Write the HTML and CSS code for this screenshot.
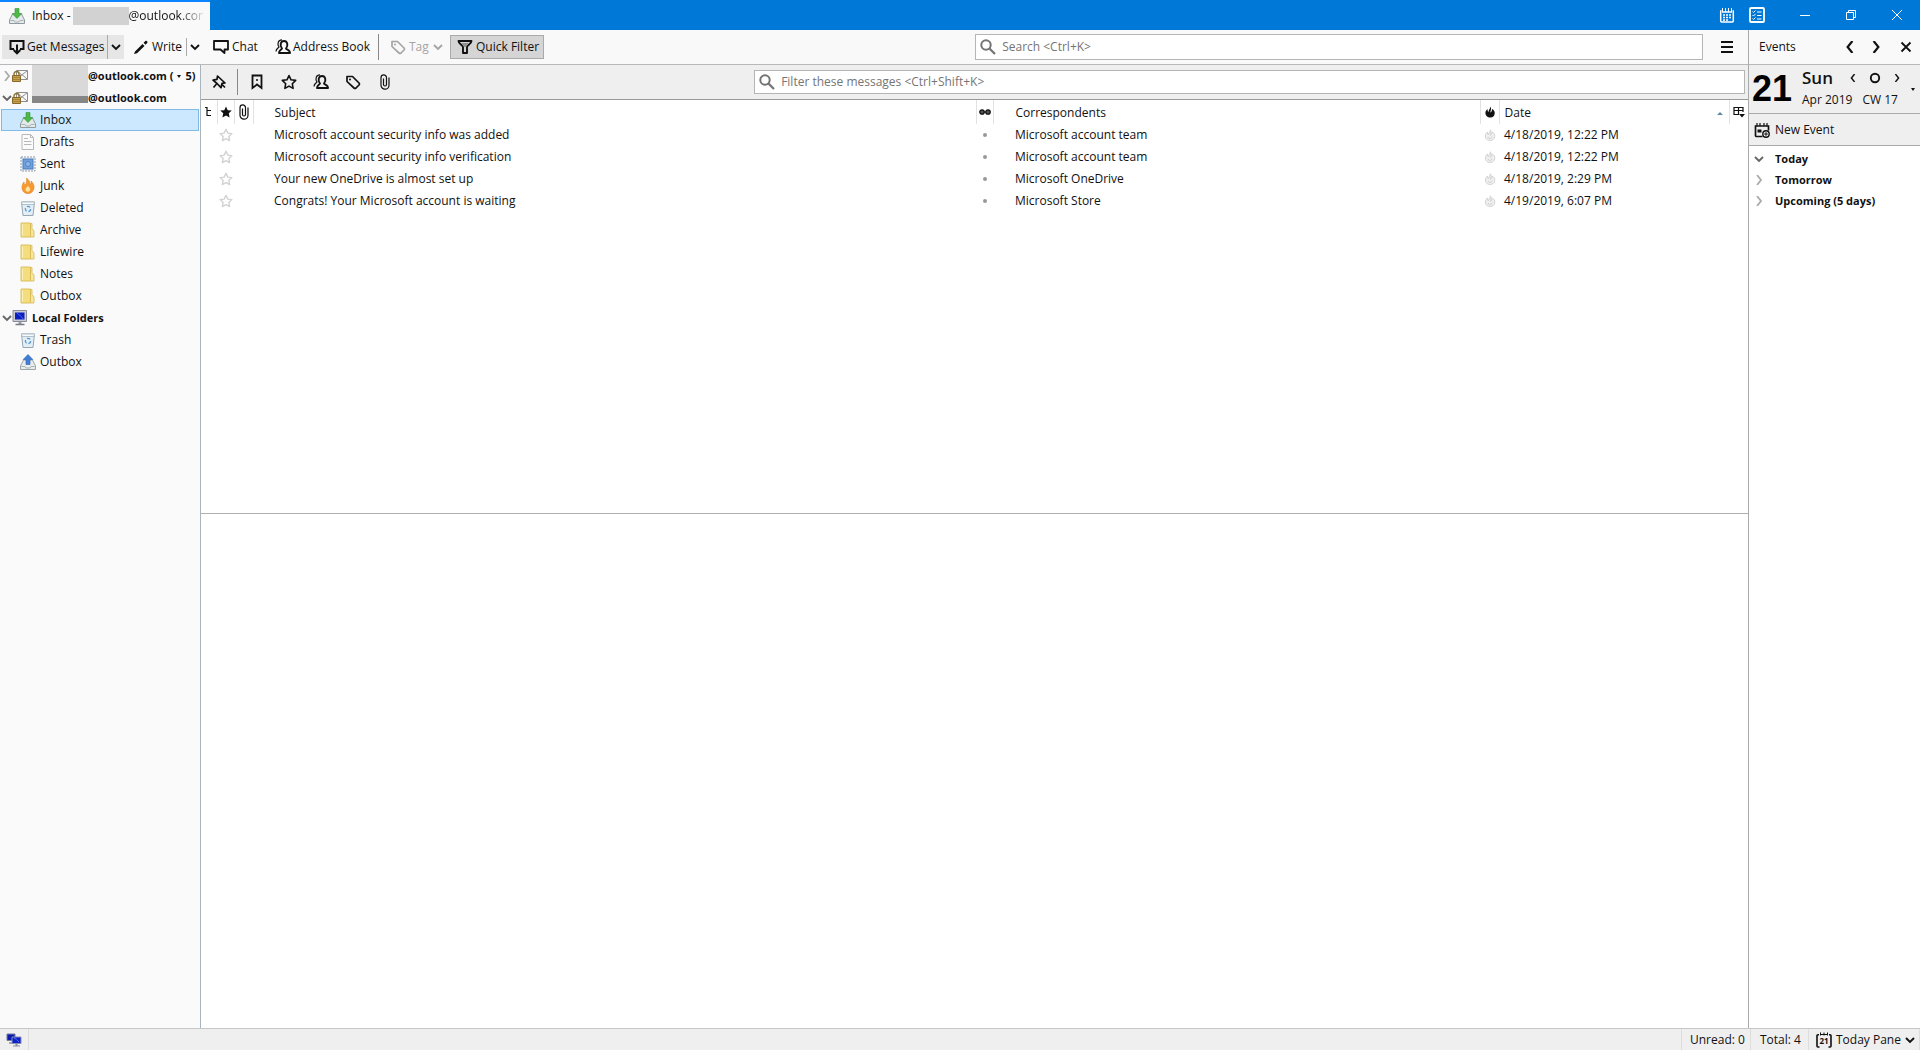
FILE: index.html
```html
<!DOCTYPE html>
<html lang="en">
<head>
<meta charset="utf-8">
<title>Inbox - outlook.com</title>
<meta name="viewport" content="width=device-width, initial-scale=1">
<link rel="stylesheet" href="styles.css">
</head>
<body>
<svg class="sprite" aria-hidden="true">
  <symbol id="inbox" viewBox="0 0 16 16"><path d="M3.500 6h9l3 6v3.500H.5V12z" fill="#e4e9ea" stroke="#8e9a9e"/><path d="M1.500 12.500h3.500l1 1.500h4l1-1.500h3.500" fill="none" stroke="#a9b3b6"/><path d="M6 .5h4v5h2.800L8 10.500 3.200 5.500H6z" fill="#4cb944" stroke="#35923a" stroke-width=".6"/></symbol>
  <symbol id="outbox" viewBox="0 0 16 16"><path d="M3.500 6h9l3 6v3.500H.5V12z" fill="#e9eced" stroke="#9aa4a8"/><path d="M1.500 12.500h3.500l1 1.500h4l1-1.500h3.500" fill="none" stroke="#a9b3b6"/><path d="M6 10.500h4v-5h2.800L8 .5 3.200 5.500H6z" fill="#3f7fd6" stroke="#2c61ad" stroke-width=".6"/></symbol>
  <symbol id="draft" viewBox="0 0 16 16"><path d="M2 .5h8.500l3 3v12H2z" fill="#fbfbfb" stroke="#b8b8b8"/><path d="M10.500.5v3h3M4 4.500h4M4 7.500h7.500M4 10.500h7.500" fill="none" stroke="#b8b8b8"/></symbol>
  <symbol id="sent" viewBox="0 0 16 16"><rect x="1" y="1" width="14" height="14" fill="#f2f4f6" stroke="#8f9aa6" stroke-dasharray="2 1"/><rect x="3" y="3" width="10" height="10" fill="#6fa0dc" stroke="#4a7dbd"/><circle cx="8" cy="8" r="2.500" fill="#8db6e8" stroke="#5486c6"/></symbol>
  <symbol id="junk" viewBox="0 0 16 16"><path d="M6.500 0c2.500 2 3.500 4 3.500 6.500 1-.5 1.500-2 1-3.500 2 2 3.500 4 3 7-.5 3.500-3 5.500-6 5.500s-6-2-6-6C2 7 3 5 4 4c0 1.500.5 2.500 1.300 3C6.500 5 7 3 6.500 0z" fill="#f59b2f" stroke="#e07d1e" stroke-width=".6"/><path d="M8 8c1.200 1.300 2.500 2.300 2 4.300-.5 1.500-3 2-4.200.5C5 11 6 9.500 8 8z" fill="#ffe3a3"/></symbol>
  <symbol id="trash" viewBox="0 0 16 16"><path d="M1.500 2h13l-1.500 13.500H3z" fill="#e3eef5" stroke="#94a7b3"/><path d="M1.500 2h13L14 4.500H2z" fill="#f6fafc" stroke="#a4b4be" stroke-width=".8"/><circle cx="8" cy="9" r="2.600" fill="none" stroke="#5a9bcf" stroke-width="1.300" stroke-dasharray="3.500 1.900"/></symbol>
  <symbol id="folder" viewBox="0 0 16 16"><path d="M1 1h9.500v14H1z" fill="#f4dd7e" stroke="#dcc05c"/><path d="M10.500 1.500h1.500v5l2 2.500v6h-3.500z" fill="#f7e79b" stroke="#d6b852" stroke-width=".8"/><path d="M2.500 2.500v11" stroke="#fbf0b8"/></symbol>
  <symbol id="pc" viewBox="0 0 16 16"><path d="M1 .5h13.500v11H1z" fill="#c9ccd4" stroke="#8a8d99"/><path d="M3 2.500h9.500v7H3z" fill="#0b1fc0"/><path d="M5 3c1.500 2 4 2 6 6" stroke="#4b6bff" fill="none"/><path d="M6.500 12h3v2h-3z" fill="#9a9da6"/><path d="M3.500 14.500h9" stroke="#777a85" stroke-width="1.500"/></symbol>
  <symbol id="account" viewBox="0 0 16 16"><path d="M4.500 2.500h11v9h-11z" fill="#f8f8f8" stroke="#8d8d8d"/><path d="M5 3l5.500 4.500M15 3L9 7.500M15 11l-4.500-4" stroke="#8d8d8d" fill="none"/><path d="M2 8V6a2.500 2.500 0 0 1 5 0v2" fill="none" stroke="#8b7238" stroke-width="1.400"/><path d="M.5 7.500h8v6h-8z" fill="#c7a04b" stroke="#86682a"/><path d="M1 9.500h7M1 11.500h7" stroke="#a88439"/></symbol>
  <symbol id="network" viewBox="0 0 16 16"><path d="M1 2h8v6.500H1z" fill="#0a1cae" stroke="#777b9c"/><path d="M3 11h5" stroke="#8b8ea0" stroke-width="1.500"/><path d="M6 5h9v6.500H6z" fill="#0b22cc" stroke="#8a8eb0"/><path d="M8 6c2 1 3 2 5 4" stroke="#5876ff"/><path d="M9.500 12h2v1.500h2.500v1H7v-1h2.500z" fill="#8b8ea0"/></symbol>
  <symbol id="get" viewBox="0 0 16 16"><path d="M5 10H1.500V2h13v8H11M8 5.500V14M4.700 11L8 14.300 11.300 11" fill="none" stroke="currentColor" stroke-width="2"/></symbol>
  <symbol id="down" viewBox="0 0 10 10"><path d="M1 3l4 4 4-4" fill="none" stroke="currentColor" stroke-width="1.900"/></symbol>
  <symbol id="left" viewBox="0 0 10 10"><path d="M7 0L3 5l4 5" fill="none" stroke="currentColor" stroke-width="1.800"/></symbol>
  <symbol id="right" viewBox="0 0 10 10"><path d="M3 0l4 5-4 5" fill="none" stroke="currentColor" stroke-width="1.800"/></symbol>
  <symbol id="pen" viewBox="0 0 16 16"><path d="M2 12.500l7.500-7.500 2 2L4 14.300l-3 .8zM10.600 3.800l1.800-1.800c1.200-.6 2.400.6 2 1.800l-1.900 1.900z" fill="currentColor"/></symbol>
  <symbol id="chat" viewBox="0 0 16 16"><path d="M1 2h14v8.500h-3.500V14l-4-3.500H1z" fill="none" stroke="currentColor" stroke-width="1.800" stroke-linejoin="round"/></symbol>
  <symbol id="people" viewBox="0 0 16 16"><path d="M7 9.500C4.500 6.500 5.500 2 9 2s4.500 4.500 2 7.500c0 1 4 1 4 4.500H4c0-3 3-3.500 3-4.500z" fill="none" stroke="currentColor" stroke-width="1.900" stroke-linejoin="round"/><path d="M7 .8C3 .8 2 5 4 8c-.5 1.200-3 1.500-3 4.500" fill="none" stroke="currentColor" stroke-width="1.200"/></symbol>
  <symbol id="tag" viewBox="0 0 16 16"><path d="M2 2.500h5.500L14 9a1.500 1.500 0 0 1 0 2L11 14a1.500 1.500 0 0 1-2 0L2 7.500z" fill="none" stroke="currentColor" stroke-width="1.700" stroke-linejoin="round"/><circle cx="5" cy="5.500" r="1" fill="currentColor"/></symbol>
  <symbol id="funnel" viewBox="0 0 16 16"><path d="M1.500 2h13c0 3-4.500 4-4.500 6v6H6V8C6 6 1.500 5 1.500 2z" fill="none" stroke="currentColor" stroke-width="1.900" stroke-linejoin="round"/><path d="M4 4h8L8.500 8h-1z" fill="#909093"/></symbol>
  <symbol id="search" viewBox="0 0 16 16"><circle cx="6" cy="6" r="4.700" fill="none" stroke="currentColor" stroke-width="2"/><path d="M9.500 9.500l5.500 5.500" stroke="currentColor" stroke-width="2.200"/></symbol>
  <symbol id="pin" viewBox="0 0 16 16"><path d="M6.500 2l7.500 7-3 .4-1 4.300-4-4.200L2 6.200l4-.9zM5.500 10L2.500 13.500M10.500 10l3.500 3.500" fill="none" stroke="currentColor" stroke-width="1.700" stroke-linejoin="round"/></symbol>
  <symbol id="bookmark" viewBox="0 0 16 16"><path d="M3.500 1.500h9v12.500L8 10.500 3.500 14z" fill="none" stroke="currentColor" stroke-width="1.800"/><circle cx="8" cy="6" r="1" fill="currentColor"/></symbol>
  <symbol id="star" viewBox="0 0 16 16"><path d="M8 1.500l2 4.300 4.700.6-3.400 3.300.8 4.700L8 12.100l-4.100 2.300.8-4.700L1.300 6.400 6 5.800z" fill="none" stroke="currentColor" stroke-width="1.600" stroke-linejoin="round"/></symbol>
  <symbol id="starfull" viewBox="0 0 16 16"><path d="M8 .5l2.300 5 5.400.6-4 3.700 1.100 5.400L8 12.500l-4.800 2.700 1.100-5.400-4-3.700 5.400-.6z" fill="currentColor"/></symbol>
  <symbol id="clip" viewBox="0 0 16 16"><path d="M6.500 4.500v6a1.500 1.500 0 0 0 3 0V3.700a2.700 2.700 0 0 0-5.500 0v7.500a4 4 0 0 0 8 0V3.500" fill="none" stroke="currentColor" stroke-width="1.200"/></symbol>
  <symbol id="thread" viewBox="0 0 12 12"><path d="M2 1.500h2M4 1v8.500h4M4 4.500h4" fill="none" stroke="currentColor" stroke-width="1.200"/></symbol>
  <symbol id="glasses" viewBox="0 0 12 12"><circle cx="3" cy="6" r="2.200" fill="#555" stroke="#111" stroke-width="1.300"/><circle cx="9" cy="6" r="2.200" fill="#555" stroke="#111" stroke-width="1.300"/><path d="M5 6h2" stroke="#111"/></symbol>
  <symbol id="flame" viewBox="0 0 12 12"><path d="M6.500.5C8 4 6 5 6.500 6.500 7.500 6 8 4.500 8 3c2 1 3 2.500 2.700 4.500A4.500 4.500 0 0 1 6 11.500 4.500 4.500 0 0 1 1.400 7C1.400 5 2.500 4 3.500 3c0 1.500.3 2.500 1 3C4.500 4 6 3 6.500.5z" fill="currentColor"/></symbol>
  <symbol id="flameline" viewBox="0 0 12 12"><path d="M6.500.8C8 4 6 5 6.500 6.500 7.500 6 8 4.500 8 3c2 1 3 2.500 2.700 4.500A4.600 4.600 0 0 1 6 11.400 4.600 4.600 0 0 1 1.400 7C1.400 5 2.500 4 3.500 3c0 1.500.3 2.500 1 3C4.500 4 6 3 6.500.8z" fill="#f1f1f1" stroke="currentColor"/><path d="M4 7.500a2 2 0 0 0 4 0" fill="none" stroke="currentColor"/></symbol>
  <symbol id="picker" viewBox="0 0 12 12"><path d="M1 9V1.500h9V6M1 4.500h9M5.500 1.500V8M1 8.500h5" fill="none" stroke="currentColor" stroke-width="1.200"/><path d="M6 8h6l-3 3.500z" fill="currentColor"/></symbol>
  <symbol id="calendar" viewBox="0 0 16 16"><path d="M1 4h1.500M13.500 4H15M1.700 4v10a1 1 0 0 0 1 1h10.600a1 1 0 0 0 1-1V4M3 5h10" fill="none" stroke="currentColor" stroke-width="1.500"/><path d="M3.500 1v4M6.500 1v4M9.500 1v4M12.500 1v4" stroke="currentColor"/><path d="M4 8h2M7 8h2M10 8h2M4 10.500h2M7 10.500h2M10 10.500h2M4 13h2M7 13h2" stroke="currentColor" stroke-width="1.400"/></symbol>
  <symbol id="tasks" viewBox="0 0 16 16"><rect x="1" y="1" width="14" height="14" rx="1" fill="none" stroke="currentColor" stroke-width="1.800"/><path d="M3.500 4.500l1 1 2-2M3.500 8l1 1 2-2M3.500 11.500l1 1 2-2M8 5h4.500M8 8.500h4.500M8 12h4.500" fill="none" stroke="currentColor"/></symbol>
  <symbol id="newevent" viewBox="0 0 16 16"><path d="M8.500 14.500H2.500a1 1 0 0 1-1-1V4h13v4.500" fill="none" stroke="currentColor" stroke-width="1.700"/><path d="M3 1v3M6 1v3M10 1v3M13 1v3" stroke="currentColor" stroke-width="1.200"/><path d="M3.500 7.500h4v3h-4z" fill="currentColor"/><circle cx="12" cy="12" r="3.200" fill="#efefef" stroke="currentColor" stroke-width="1.400"/><path d="M12 10.200v3.600M10.200 12h3.600" stroke="currentColor"/></symbol>
  <symbol id="dayframe" viewBox="0 0 16 16"><path d="M3 2.800H2a1 1 0 0 0-1 1V14a1 1 0 0 0 1 1h1.500M13 2.800h1a1 1 0 0 1 1 1V14a1 1 0 0 1-1 1h-1.500" fill="none" stroke="currentColor" stroke-width="1.600"/><path d="M4.500.5v3M8 .5v3M11.500.5v3M4.500 2.500h7" stroke="currentColor"/></symbol>
  <symbol id="close" viewBox="0 0 12 12"><path d="M1.500 1.500l9 9M10.500 1.500l-9 9" stroke="currentColor" stroke-width="1.800"/></symbol>
</svg>

<div class="window">
  <header class="titlebar">
    <div class="tab">
      <svg class="icon16"><use href="#inbox"/></svg>
      <span class="tab-text">Inbox -<span class="mask mask-tab"></span><span class="fade">@outlook.com</span></span>
    </div>
    <div class="window-buttons">
      <div class="shortcuts">
        <button class="cal" aria-label="Calendar"><svg class="icon16"><use href="#calendar"/></svg></button>
        <button class="cal" aria-label="Tasks"><svg class="icon16"><use href="#tasks"/></svg></button>
      </div>
      <button class="sys" aria-label="Minimize"><svg class="icon12" viewBox="0 0 12 12"><path d="M1 6.500h10" stroke="currentColor"/></svg></button>
      <button class="sys" aria-label="Restore"><svg class="icon12" viewBox="0 0 12 12"><path d="M1.500 3.500h7v7h-7zM3.500 3V1.500h7v7H9" fill="none" stroke="currentColor"/></svg></button>
      <button class="sys" aria-label="Close"><svg class="icon12" viewBox="0 0 12 12"><path d="M1 1l10 10M11 1L1 11" stroke="currentColor"/></svg></button>
    </div>
  </header>

  <div class="content">
    <div class="mail">
      <div class="toolbar">
        <button class="tool tool-get"><svg class="icon16"><use href="#get"/></svg>Get Messages</button>
        <button class="drop drop-get" aria-label="Get messages options"><svg class="icon10"><use href="#down"/></svg></button>
        <button class="tool tool-write"><svg class="icon16"><use href="#pen"/></svg>Write</button>
        <button class="drop" aria-label="Write options"><svg class="icon10"><use href="#down"/></svg></button>
        <button class="tool tool-chat"><svg class="icon16"><use href="#chat"/></svg>Chat</button>
        <button class="tool tool-book"><svg class="icon16"><use href="#people"/></svg>Address Book</button>
        <span class="rule"></span>
        <button class="tool tool-tag" disabled><svg class="icon16"><use href="#tag"/></svg>Tag<svg class="icon10"><use href="#down"/></svg></button>
        <button class="tool tool-filter" aria-pressed="true"><svg class="icon16"><use href="#funnel"/></svg>Quick Filter</button>
        <label class="field search"><svg class="icon16"><use href="#search"/></svg><input type="text" aria-label="Search" placeholder="Search &lt;Ctrl+K&gt;"></label>
        <button class="menu" aria-label="Application menu"><svg class="icon16" viewBox="0 0 16 16"><path d="M2 3h12M2 8h12M2 13h12" stroke="currentColor" stroke-width="1.800"/></svg></button>
      </div>

      <div class="panes">
        <nav class="folders" aria-label="Folders">
          <a class="row account" href="#a"><svg class="icon10 pale"><use href="#right"/></svg><svg class="icon16"><use href="#account"/></svg><span class="mask"></span>@outlook.com (<span class="tri"></span>5)</a>
          <a class="row account" href="#b"><svg class="icon10 grey"><use href="#down"/></svg><svg class="icon16"><use href="#account"/></svg><span class="mask mask-dark"></span>@outlook.com</a>
          <a class="row sub selected" href="#inbox-folder"><svg class="icon16"><use href="#inbox"/></svg>Inbox</a>
          <a class="row sub" href="#drafts"><svg class="icon16"><use href="#draft"/></svg>Drafts</a>
          <a class="row sub" href="#sent-folder"><svg class="icon16"><use href="#sent"/></svg>Sent</a>
          <a class="row sub" href="#junk-folder"><svg class="icon16"><use href="#junk"/></svg>Junk</a>
          <a class="row sub" href="#deleted"><svg class="icon16"><use href="#trash"/></svg>Deleted</a>
          <a class="row sub" href="#archive"><svg class="icon16"><use href="#folder"/></svg>Archive</a>
          <a class="row sub" href="#lifewire"><svg class="icon16"><use href="#folder"/></svg>Lifewire</a>
          <a class="row sub" href="#notes"><svg class="icon16"><use href="#folder"/></svg>Notes</a>
          <a class="row sub" href="#outbox1"><svg class="icon16"><use href="#folder"/></svg>Outbox</a>
          <a class="row account local" href="#local"><svg class="icon10 grey"><use href="#down"/></svg><svg class="icon16"><use href="#pc"/></svg>Local Folders</a>
          <a class="row sub" href="#trash-folder"><svg class="icon16"><use href="#trash"/></svg>Trash</a>
          <a class="row sub" href="#outbox2"><svg class="icon16"><use href="#outbox"/></svg>Outbox</a>
        </nav>

        <main class="messages">
          <div class="filterbar">
            <button class="quick quick-pin" aria-label="Keep filters"><svg class="icon16"><use href="#pin"/></svg></button>
            <span class="rule"></span>
            <button class="quick" aria-label="Unread"><svg class="icon16"><use href="#bookmark"/></svg></button>
            <button class="quick" aria-label="Starred"><svg class="icon16"><use href="#star"/></svg></button>
            <button class="quick" aria-label="Contact"><svg class="icon16"><use href="#people"/></svg></button>
            <button class="quick" aria-label="Tags"><svg class="icon16"><use href="#tag"/></svg></button>
            <button class="quick" aria-label="Attachment"><svg class="icon16"><use href="#clip"/></svg></button>
            <label class="field filter"><svg class="icon16"><use href="#search"/></svg><input type="text" aria-label="Filter" placeholder="Filter these messages &lt;Ctrl+Shift+K&gt;"></label>
          </div>

          <div class="list">
            <table>
              <colgroup><col class="c-thread"><col class="c-star"><col class="c-clip"><col class="c-subject"><col class="c-read"><col><col class="c-junk"><col class="c-date"><col class="c-pick"></colgroup>
              <thead>
                <tr>
                  <th><svg class="icon12"><use href="#thread"/></svg></th>
                  <th><svg class="icon12"><use href="#starfull"/></svg></th>
                  <th><svg class="icon16"><use href="#clip"/></svg></th>
                  <th class="wide">Subject</th>
                  <th><svg class="icon12"><use href="#glasses"/></svg></th>
                  <th class="wide">Correspondents</th>
                  <th><svg class="icon12"><use href="#flame"/></svg></th>
                  <th class="date"><span class="sorted">Date<svg class="sort" viewBox="0 0 8 4"><path d="M0 4l4-4 4 4z" fill="#5d8ba3"/></svg></span></th>
                  <th><svg class="icon12"><use href="#picker"/></svg></th>
                </tr>
              </thead>
              <tbody>
                <tr><td></td><td><svg class="icon14"><use href="#star"/></svg></td><td></td><td class="wide">Microsoft account security info was added</td><td><i class="dot"></i></td><td class="wide">Microsoft account team</td><td><svg class="icon12"><use href="#flameline"/></svg></td><td class="date">4/18/2019, 12:22 PM</td><td></td></tr>
                <tr><td></td><td><svg class="icon14"><use href="#star"/></svg></td><td></td><td class="wide">Microsoft account security info verification</td><td><i class="dot"></i></td><td class="wide">Microsoft account team</td><td><svg class="icon12"><use href="#flameline"/></svg></td><td class="date">4/18/2019, 12:22 PM</td><td></td></tr>
                <tr><td></td><td><svg class="icon14"><use href="#star"/></svg></td><td></td><td class="wide">Your new OneDrive is almost set up</td><td><i class="dot"></i></td><td class="wide">Microsoft OneDrive</td><td><svg class="icon12"><use href="#flameline"/></svg></td><td class="date">4/18/2019, 2:29 PM</td><td></td></tr>
                <tr><td></td><td><svg class="icon14"><use href="#star"/></svg></td><td></td><td class="wide">Congrats! Your Microsoft account is waiting</td><td><i class="dot"></i></td><td class="wide">Microsoft Store</td><td><svg class="icon12"><use href="#flameline"/></svg></td><td class="date">4/19/2019, 6:07 PM</td><td></td></tr>
              </tbody>
            </table>
          </div>
          <div class="preview"></div>
        </main>
      </div>
    </div>

    <aside class="today">
      <div class="today-head">
        <span class="today-title">Events</span>
        <button aria-label="Previous"><svg class="icon12"><use href="#left"/></svg></button>
        <button aria-label="Next"><svg class="icon12"><use href="#right"/></svg></button>
        <button aria-label="Close pane"><svg class="icon12"><use href="#close"/></svg></button>
      </div>
      <div class="day">
        <div class="day-number">21</div>
        <div class="day-info">
          <div class="day-line">
            <span class="weekday">Sun</span>
            <button aria-label="Previous day"><svg class="icon8"><use href="#left"/></svg></button>
            <button aria-label="Today"><svg class="icon12" viewBox="0 0 12 12"><circle cx="6" cy="6" r="4.200" fill="none" stroke="currentColor" stroke-width="1.900"/></svg></button>
            <button aria-label="Next day"><svg class="icon8"><use href="#right"/></svg></button>
          </div>
          <div class="day-line month-line"><span>Apr 2019</span><span>CW 17</span></div>
        </div>
        <button class="day-drop" aria-label="Show month"><span class="tri"></span></button>
      </div>
      <button class="new-event"><svg class="icon16"><use href="#newevent"/></svg>New Event</button>
      <ul class="agenda">
        <li><svg class="icon10 grey"><use href="#down"/></svg>Today</li>
        <li><svg class="icon10 pale"><use href="#right"/></svg>Tomorrow</li>
        <li><svg class="icon10 pale"><use href="#right"/></svg>Upcoming (5 days)</li>
      </ul>
    </aside>
  </div>

  <footer class="status">
    <span class="online"><svg class="icon16"><use href="#network"/></svg></span>
    <span class="unread">Unread: 0</span>
    <span class="total">Total: 4</span>
    <button class="pane-toggle"><span class="mini-day"><svg class="icon16"><use href="#dayframe"/></svg><b>21</b></span>Today Pane<svg class="icon10"><use href="#down"/></svg></button>
  </footer>
</div>
</body>
</html>
```
FILE: styles.css
```css
* { box-sizing: border-box; }

body {
  margin: 0;
  font: 12px/16px "Open Sans", "Noto Sans", sans-serif;
  color: #111;
  background: #fff;
}

button, input { font: inherit; color: inherit; }

button {
  display: flex;
  align-items: center;
  border: 0;
  padding: 0;
  background: none;
  white-space: nowrap;
}

svg { display: block; flex: none; }
.sprite { position: absolute; width: 0; height: 0; }
.icon16 { width: 16px; height: 16px; }
.icon14 { width: 14px; height: 14px; }
.icon12 { width: 12px; height: 12px; }
.icon10 { width: 10px; height: 10px; }
.icon8 { width: 8px; height: 8px; }
.grey { color: #666; }
.pale { color: #aaa; }

.window { display: flex; flex-direction: column; min-height: 100vh; }

/* Title bar */
.titlebar {
  display: flex;
  justify-content: space-between;
  height: 30px;
  background: #0078d7;
}
.tab {
  display: flex;
  align-items: center;
  gap: 7px;
  width: 210px;
  padding: 0 7px 0 9px;
  border-top: 2px solid #0a84ff;
  background: #f9f9fa;
}
.tab-text { display: flex; align-items: center; min-width: 0; white-space: nowrap; }
.mask { flex: none; align-self: flex-start; width: 56px; height: 22px; background: #d9d9d9; }
.mask-tab { align-self: center; height: 18px; margin-left: 2px; background: #d2d2d2; }
.mask-dark { height: 16px; background: linear-gradient(#d9d9d9 9px, #868686 9px); }
.fade {
  min-width: 0;
  overflow: hidden;
  color: transparent;
  background: linear-gradient(90deg, #111 50px, #ddd 74px);
  background-clip: text;
}
.window-buttons, .shortcuts { display: flex; color: #fff; }
.shortcuts { margin-right: 10px; }
.window-buttons button { justify-content: center; }
.cal { width: 30px; }
.sys { width: 46px; }

.content { display: flex; flex: 1; }
.mail { display: flex; flex: 1; flex-direction: column; min-width: 0; }

/* Main toolbar */
.toolbar {
  display: flex;
  align-items: center;
  height: 35px;
  padding: 0 13px 0 2px;
  border-bottom: 1px solid #b9b9bb;
  background: #f9f9fa;
}
.tool { gap: 3px; height: 24px; padding: 0 7px; }
.tool-get { gap: 2px; width: 105px; background: #e6e6e7; }
.drop { justify-content: center; width: 17px; height: 18px; border-left: 1px solid #aaa; }
.drop-get { height: 24px; background: #e6e6e7; }
.tool-write { width: 62px; padding-left: 9px; }
.tool-chat { width: 62px; padding-left: 10px; }
.tool-book { gap: 2px; width: 113px; padding-left: 10px; }
.rule { width: 1px; height: 26px; background: #888; }
.tool-tag { width: 71px; padding-left: 11px; color: #a5a5a6; }
.tool-tag .icon10 { margin-left: 1px; }
.tool-filter { width: 94px; padding: 0 6px; border: 1px solid #aaa; background: #d5d5d6; }
.field {
  display: flex;
  align-items: center;
  gap: 6px;
  margin-left: auto;
  padding: 0 4px;
  border: 1px solid #b5b5b5;
  background: #fff;
  color: #737373;
}
.field input { flex: 1; min-width: 0; border: 0; padding: 0; outline: 0; background: none; }
.field input::placeholder { color: #757575; opacity: 1; }
.search { width: 42%; height: 26px; }
.menu { margin-left: 16px; }

.panes { display: flex; flex: 1; }

/* Folder tree */
.folders {
  flex: none;
  width: 201px;
  border-right: 1px solid #a9b4be;
  background: #fafafb;
}
.row {
  display: flex;
  align-items: center;
  height: 22px;
  color: inherit;
  text-decoration: none;
  white-space: nowrap;
}
.account { padding-left: 2px; font-size: 11px; font-weight: 700; }
.account .mask { margin-left: 4px; }
.local .icon16 { margin-right: 4px; }
.sub { gap: 4px; margin: 0 1px; padding-left: 19px; }
.selected { padding-left: 18px; border: 1px solid #7fbbe4; background: #cce8ff; }
.tri {
  margin: 0 4px;
  border: 2px solid transparent;
  border-top: 3px solid #111;
  border-bottom: 0;
}

/* Message pane */
.messages { display: flex; flex: 1; flex-direction: column; min-width: 0; }
.filterbar {
  display: flex;
  align-items: center;
  height: 35px;
  padding: 0 3px;
  border-bottom: 1px solid #999;
  background: #efefef;
}
.quick { justify-content: center; width: 32px; height: 24px; }
.quick-pin { width: 30px; }
.filterbar .rule { margin: 0 3px; }
.filter { width: 64.3%; height: 24px; }

.list { height: 414px; border-bottom: 1px solid #b0b0b0; }
.preview { flex: 1; }
table { width: 100%; border-collapse: collapse; table-layout: fixed; }
th, td { height: 22px; padding: 0; font-weight: 400; text-align: left; white-space: nowrap; }
th { height: 24px; border-right: 1px solid #e2e2e2; }
th:last-child { border-right: 0; }
th svg, td svg { margin: 0 auto; }
td svg { color: #d2d2d2; }
.c-thread { width: 16px; }
.c-star { width: 17px; }
.c-clip { width: 19px; }
.c-subject { width: 46.8%; }
.c-read { width: 17px; }
.c-junk { width: 19px; }
.c-date { width: 230px; }
.c-pick { width: 19px; }
.wide { padding-left: 21px; }
.date { padding-left: 5px; }
th.wide, th.date { padding-top: 2px; }
.sorted { display: flex; align-items: center; justify-content: space-between; padding-right: 6px; }
.sorted .sort { width: 6px; height: 3px; margin: 0; }
.dot { display: block; width: 4px; height: 4px; margin: 0 auto; border-radius: 50%; background: #999; }

/* Today pane */
.today { flex: none; width: 172px; border-left: 1px solid #aaa; }
.today-head {
  display: flex;
  align-items: center;
  gap: 14px;
  height: 35px;
  padding: 0 8px 0 10px;
  border-bottom: 1px solid #b9b9bb;
  background: #f9f9fa;
}
.today-title { margin-right: auto; }
.today-head button:last-child { margin-left: 4px; }
.day {
  display: flex;
  align-items: center;
  height: 49px;
  padding-left: 3px;
  border-bottom: 1px solid #aaa;
  background: #efefef;
}
.day-number { width: 50px; color: #000; font: 700 36px/40px "Liberation Sans", Arial, sans-serif; }
.day-info { flex: 1; white-space: nowrap; }
.day-line { display: flex; align-items: center; height: 22px; gap: 12px; }
.weekday { width: 35px; font-size: 17px; font-weight: 600; }
.month-line { gap: 10px; }
.day-drop .tri { margin: 0 5px 0 0; }
.new-event {
  gap: 5px;
  width: 100%;
  height: 32px;
  padding-left: 5px;
  border-bottom: 1px solid #aaa;
  background: #efefef;
}
.agenda { margin: 0; padding: 2px 0 0 5px; list-style: none; font-size: 11px; font-weight: 700; }
.agenda li { display: flex; align-items: center; gap: 11px; height: 21px; }

/* Status bar */
.status {
  display: flex;
  align-items: stretch;
  height: 22px;
  border-top: 1px solid #c6c6c6;
  background: #efefef;
}
.status > * { display: flex; align-items: center; border-right: 1px solid #ddd; }
.online { width: 29px; padding-left: 6px; }
.unread { width: 70px; margin-left: auto; padding-left: 8px; border-left: 1px solid #ddd; }
.total { width: 58px; padding-left: 9px; }
.pane-toggle { gap: 4px; width: 111px; padding-left: 7px; }
.mini-day { display: grid; place-items: center; }
.mini-day > * { grid-area: 1 / 1; }
.mini-day b { padding-top: 3px; font-size: 8px; line-height: 10px; }
```
